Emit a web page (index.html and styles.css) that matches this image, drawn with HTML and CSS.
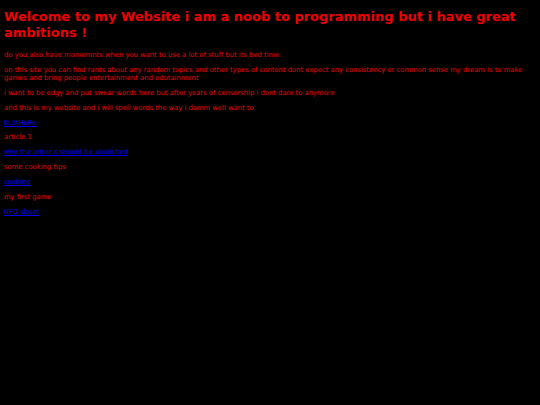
FILE: index.html
```html
<!DOCTYPE html>
<html>
<head>
<meta charset="utf-8">
<link rel="stylesheet" href="styles.css">
</head>
<body class="page">
<h1 class="title">Welcome to my Website i am a noob to programming but i have great ambitions !</h1>
<p class="txt">do you also have momemnts when you want to use a lot of stuff but its bed time</p>
<p class="txt">on this site you can find rants about any random topics and other types of content dont expect any consistency or common sense my dream is to make games and bring people entertainment and edutainment</p>
<p class="txt">i want to be edgy and put swear words here but after years of censorship i dont dare to anymore</p>
<p class="txt">and this is my website and i will spell words the way i damm well want to</p>
<p class="txt"><a class="lnk" href="#">KLIKHeRe</a></p>
<p class="txt">article 1</p>
<p class="txt"><a class="lnk" href="#">why the letter c should be abolished</a></p>
<p class="txt">some cooking tips</p>
<p class="txt"><a class="lnk" href="#">cooking</a></p>
<p class="txt">my first game</p>
<p class="txt"><a class="lnk" href="#">UFO shoot</a></p>
</body>
</html>
```
FILE: styles.css
```css
html { background: #000; }
.page {
  margin: 4px;
  background: #000;
  color: #e00;
  font-family: "DejaVu Sans", Verdana, sans-serif;
}
.title {
  font-size: 13px;
  line-height: 16px;
  font-weight: bold;
  margin: 5px 0 10px;
  color: #e00;
}
.txt {
  font-size: 6.8px;
  line-height: 8px;
  margin: 6.9px 0;
}
.lnk { color: #00e; }
```
